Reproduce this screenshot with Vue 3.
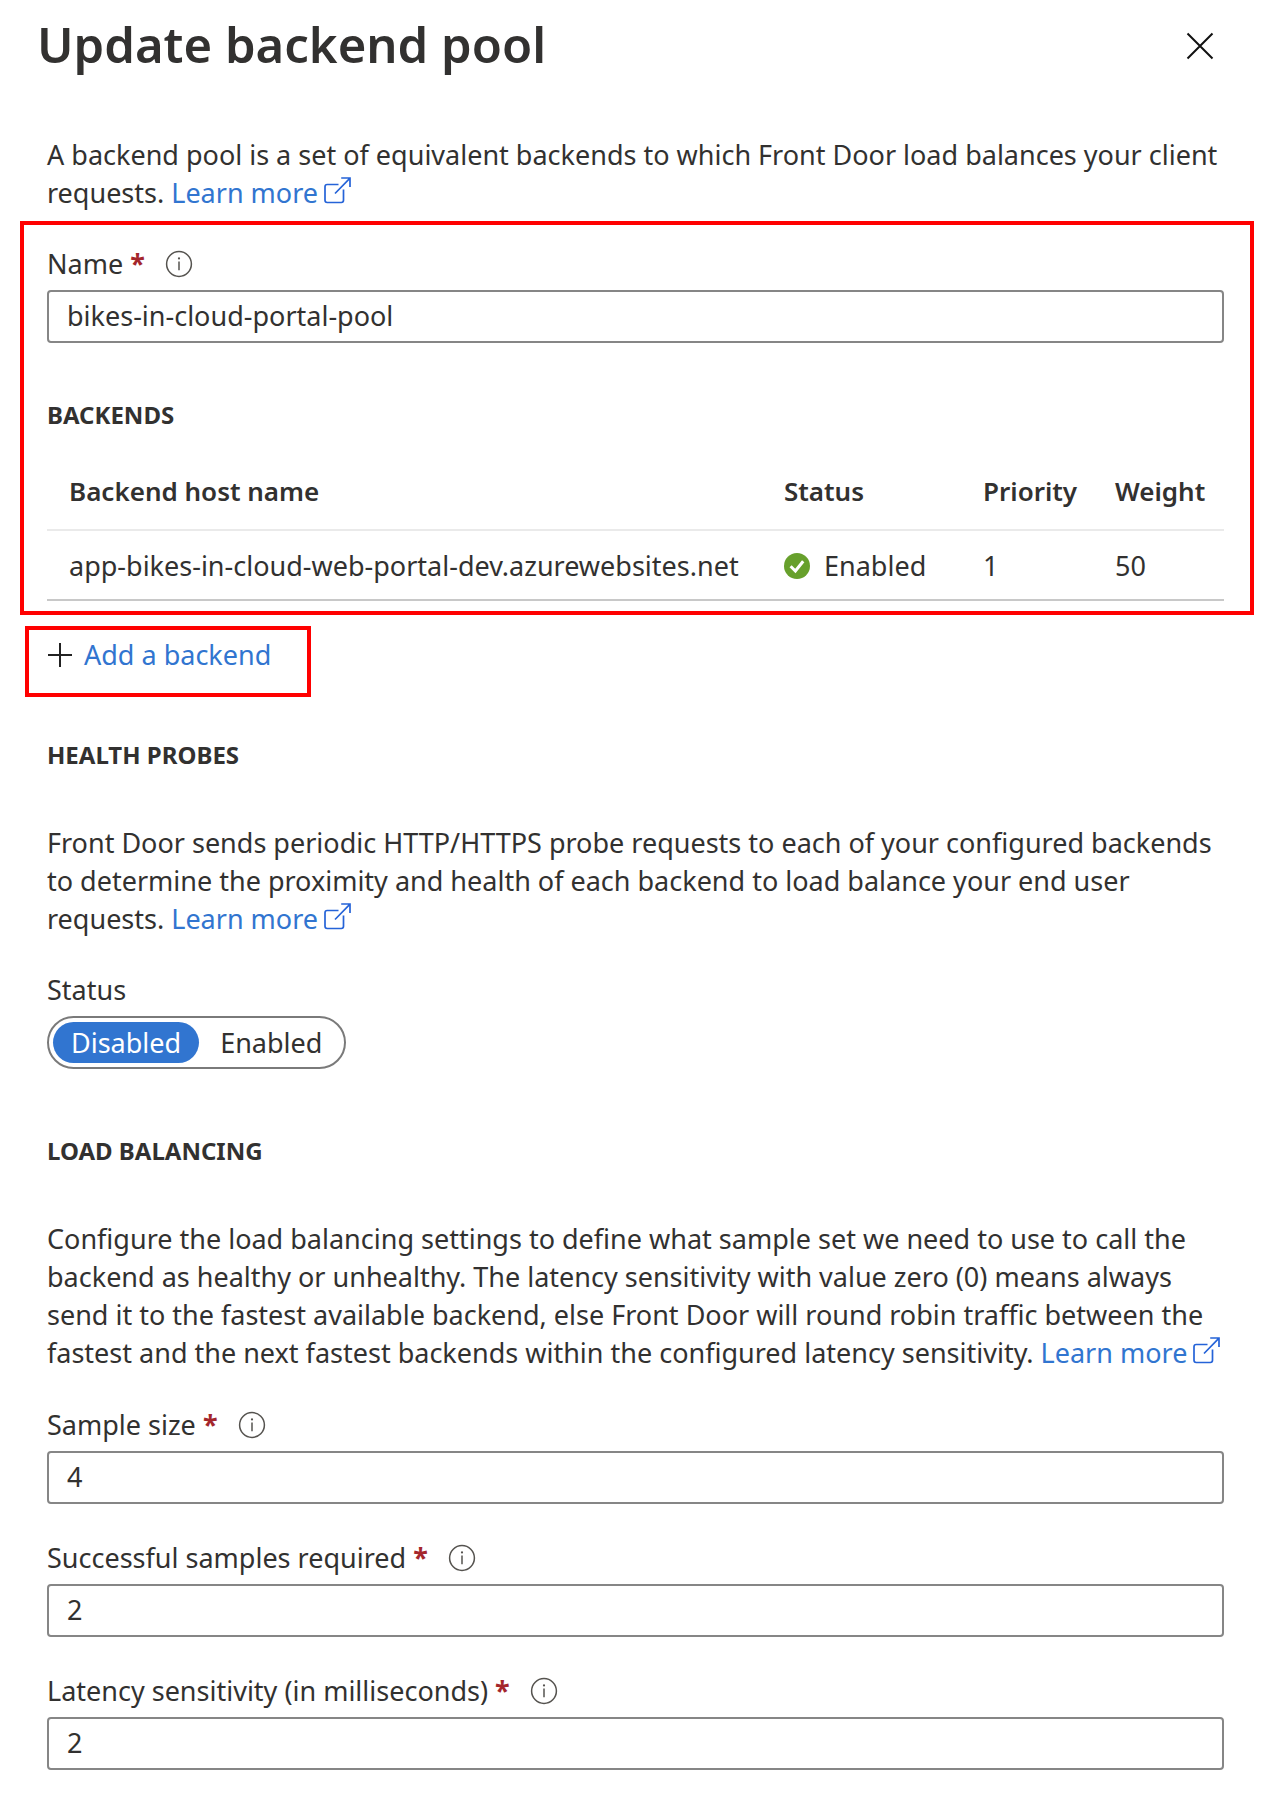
<script setup>
import { ref, h } from 'vue'

const poolName = ref('bikes-in-cloud-portal-pool')
const probeStatus = ref('disabled')

const backends = [
  { host: 'app-bikes-in-cloud-web-portal-dev.azurewebsites.net', status: 'Enabled', priority: 1, weight: 50 },
]

const settings = ref([
  { id: 'sample-size', label: 'Sample size', value: '4' },
  { id: 'successful-samples', label: 'Successful samples required', value: '2' },
  { id: 'latency', label: 'Latency sensitivity (in milliseconds)', value: '2' },
])

const stroke = (color, width) => ({ fill: 'none', stroke: color, 'stroke-width': width })

const InfoIcon = () =>
  h('svg', { width: 28, height: 28, viewBox: '0 0 28 28', 'aria-hidden': 'true', ...stroke('#55534f', 1.5) }, [
    h('circle', { cx: 14, cy: 14, r: 12.4 }),
    h('path', { d: 'M14 11.4v8.8' }),
    h('circle', { cx: 14, cy: 8.4, r: 1.1, fill: '#55534f', stroke: 'none' }),
  ])

const ExternalIcon = () =>
  h('svg', { width: 27, height: 27, viewBox: '0 0 27 27', 'aria-hidden': 'true', ...stroke('#2563d8', 1.7) }, [
    h('path', { d: 'M14.5 7.5H3.2Q1 7.5 1 9.7V23.3Q1 25.5 3.2 25.5H17.3Q19.5 25.5 19.5 23.3V12.5' }),
    h('path', { d: 'M11 16.5L26 1.2M17.2 1H26V10' }),
  ])
</script>

<template>
  <main class="panel">
    <header class="header">
      <h1>Update backend pool</h1>
      <button type="button" class="close" aria-label="Close">
        <svg width="28" height="28" viewBox="0 0 28 28" fill="none" stroke="#111" stroke-width="2">
          <path d="M1.5 1.5L26.5 26.5M26.5 1.5L1.5 26.5" />
        </svg>
      </button>
    </header>

    <p class="intro">
      A backend pool is a set of equivalent backends to which Front Door load balances your client
      requests. <a href="#" class="link">Learn more<ExternalIcon class="external" /></a>
    </p>

    <section class="callout pool">
      <div class="label-row">
        <label for="pool-name">Name <span class="required">*</span></label>
        <InfoIcon class="info" />
      </div>
      <input id="pool-name" v-model="poolName" type="text" class="field" />

      <h2>BACKENDS</h2>
      <table>
        <thead>
          <tr>
            <th class="host">Backend host name</th>
            <th class="status">Status</th>
            <th class="priority">Priority</th>
            <th class="weight">Weight</th>
          </tr>
        </thead>
        <tbody>
          <tr v-for="b in backends" :key="b.host">
            <td>{{ b.host }}</td>
            <td>
              <span class="state">
                <svg width="26" height="26" viewBox="0 0 26 26" aria-hidden="true">
                  <circle cx="13" cy="13" r="13" fill="#67a02c" />
                  <path d="M6.6 13.2L11.4 18L19.2 8.2" fill="none" stroke="#fff" stroke-width="3" />
                </svg>
                {{ b.status }}
              </span>
            </td>
            <td>{{ b.priority }}</td>
            <td>{{ b.weight }}</td>
          </tr>
        </tbody>
      </table>
    </section>

    <div class="callout add">
      <svg width="24" height="24" viewBox="0 0 24 24" fill="none" stroke="#222" stroke-width="2" aria-hidden="true">
        <path d="M12 0V24M0 12H24" />
      </svg>
      <a href="#" class="link">Add a backend</a>
    </div>

    <section class="probes">
      <h2>HEALTH PROBES</h2>
      <p>
        Front Door sends periodic HTTP/HTTPS probe requests to each of your configured backends
        to determine the proximity and health of each backend to load balance your end user
        requests. <a href="#" class="link">Learn more<ExternalIcon class="external" /></a>
      </p>
      <fieldset>
        <legend>Status</legend>
        <div class="toggle">
          <label :class="{ on: probeStatus === 'disabled' }">
            <input v-model="probeStatus" type="radio" name="probe" value="disabled" />Disabled
          </label>
          <label :class="{ on: probeStatus === 'enabled' }">
            <input v-model="probeStatus" type="radio" name="probe" value="enabled" />Enabled
          </label>
        </div>
      </fieldset>
    </section>

    <section class="balancing">
      <h2>LOAD BALANCING</h2>
      <p>
        Configure the load balancing settings to define what sample set we need to use to call the
        backend as healthy or unhealthy. The latency sensitivity with value zero (0) means always
        send it to the fastest available backend, else Front Door will round robin traffic between the
        fastest and the next fastest backends within the configured latency sensitivity.
        <a href="#" class="link">Learn more<ExternalIcon class="external" /></a>
      </p>
      <div class="settings">
        <div v-for="s in settings" :key="s.id">
          <div class="label-row">
            <label :for="s.id">{{ s.label }} <span class="required">*</span></label>
            <InfoIcon class="info" />
          </div>
          <input :id="s.id" v-model="s.value" type="text" class="field" />
        </div>
      </div>
    </section>
  </main>
</template>

<style>
body {
  margin: 0;
  background: #fff;
}
</style>

<style scoped>
.panel {
  box-sizing: border-box;
  padding: 14px 40px 32px 47px;
  font: 27px/38px 'Noto Sans', 'Open Sans', sans-serif;
  color: #323130;
}
.header {
  display: flex;
  justify-content: space-between;
  align-items: flex-start;
  margin: 0 10px 62px -10px;
}
h1 {
  margin: 0;
  font-size: 49px;
  line-height: 60px;
  font-weight: 600;
}
.close {
  display: flex;
  margin: 18px 0 0;
  padding: 0;
  border: 0;
  background: none;
}
h2 {
  margin: 0;
  font-size: 24px;
  line-height: 32px;
  font-weight: 700;
}
p {
  margin: 0;
}
.link {
  color: #3175d0;
  text-decoration: none;
  white-space: nowrap;
}
.external {
  margin-left: 6px;
  vertical-align: -1px;
}
.callout {
  border: 4px solid #f00;
}
.pool {
  margin: 9px -30px 0 -27px;
  padding: 20px 26px 10px 23px;
}
.label-row {
  display: flex;
  align-items: center;
  gap: 20px;
  margin-bottom: 7px;
}
.required {
  color: #a4262c;
  font-weight: 700;
}
.field {
  display: block;
  box-sizing: border-box;
  width: 100%;
  height: 53px;
  padding: 0 18px 3px;
  border: 2px solid #868686;
  border-radius: 4px;
  background: #fff;
  color: inherit;
  font: inherit;
}
.pool h2 {
  margin: 56px 0 23px;
}
table {
  width: 100%;
  border-collapse: separate;
  border-spacing: 0;
  table-layout: fixed;
}
th,
td {
  padding: 18px 0 19px;
  border-bottom: 2px solid #eaeaea;
  text-align: left;
  font-size: 26px;
  font-weight: 600;
}
td {
  padding: 16px 0 14px;
  border-color: #c8c8c8;
  font-size: 27px;
  font-weight: 400;
  white-space: nowrap;
}
th:first-child,
td:first-child {
  padding-left: 22px;
}
.host {
  width: 715px;
}
.priority {
  width: 132px;
}
.weight {
  width: 109px;
}
.state {
  display: flex;
  align-items: center;
  gap: 14px;
}
.add {
  display: flex;
  align-items: center;
  gap: 12px;
  width: fit-content;
  margin: 11px 0 0 -22px;
  padding: 6px 36px 19px 19px;
}
.probes {
  margin-top: 42px;
}
.probes h2,
.balancing h2 {
  margin-bottom: 53px;
}
fieldset {
  margin: 33px 0 0;
  padding: 0;
  border: 0;
}
legend {
  padding: 0;
  margin-bottom: 7px;
}
.toggle {
  display: flex;
  gap: 3px;
  box-sizing: border-box;
  width: fit-content;
  height: 53px;
  padding: 4px;
  border: 2px solid #7a7a7a;
  border-radius: 27px;
}
.toggle label {
  padding: 0 18px;
  border-radius: 21px;
  line-height: 41px;
}
.toggle .on {
  background: #3175d0;
  color: #fff;
}
.toggle input {
  position: absolute;
  opacity: 0;
  margin: 0;
}
.balancing {
  margin-top: 66px;
}
.settings {
  display: flex;
  flex-direction: column;
  gap: 35px;
  margin-top: 34px;
}
</style>
